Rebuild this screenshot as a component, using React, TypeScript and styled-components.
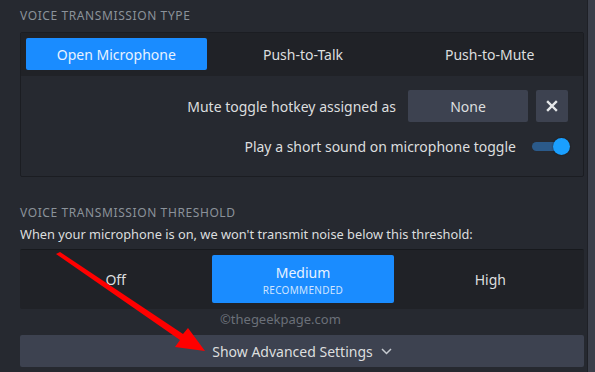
import React from 'react';
import styled, { createGlobalStyle } from 'styled-components';

const GlobalStyle = createGlobalStyle`
  html, body {
    margin: 0;
    padding: 0;
    background: #262930;
  }
  body {
    font-family: "Noto Sans", "Open Sans", Arial, sans-serif;
    color: #dcdedf;
  }
`;

const Page = styled.div`
  position: relative;
  width: 595px;
  height: 372px;
  display: flex;
  overflow: hidden;
  background: #262930;
`;

const Content = styled.div`
  flex: 1;
  padding: 8px 0 0 20px;
  display: flex;
  flex-direction: column;
`;

const Scrollbar = styled.div`
  width: 7px;
  margin-left: 3px;
  border-left: 1px solid #1e2026;
  background: #3b3f4a;
`;

const SectionTitle = styled.div<{ $top?: number }>`
  font-size: 12px;
  line-height: 16px;
  letter-spacing: 0.6px;
  color: #8b929a;
  text-transform: uppercase;
  margin-top: ${(p) => p.$top ?? 0}px;
`;

const Box = styled.div`
  margin-top: 8px;
  border: 1px solid #1b1d22;
  border-radius: 2px;
  overflow: hidden;
`;

const Segmented = styled.div`
  display: grid;
  grid-template-columns: repeat(3, 1fr);
  gap: 6px;
  padding: 5px 3px 6px 5px;
  background: #202227;
`;

const SegButton = styled.div<{ $active?: boolean; $tall?: boolean }>`
  height: ${(p) => (p.$tall ? 48 : 32)}px;
  border-radius: 2px;
  background: ${(p) => (p.$active ? '#1a8cff' : 'transparent')};
  color: ${(p) => (p.$active ? '#e8f2ff' : '#dcdedf')};
  display: flex;
  flex-direction: column;
  align-items: center;
  justify-content: center;
  font-size: 14px;
`;

const SubLabel = styled.span`
  font-size: 10px;
  line-height: 12px;
  letter-spacing: 0.3px;
  color: #cfe4ff;
  margin-top: 2px;
`;

const Options = styled.div`
  display: flex;
  flex-direction: column;
  align-items: flex-end;
  padding: 14px 15px 20px 0;
  gap: 15px;
`;

const OptionRow = styled.div`
  display: flex;
  align-items: center;
  font-size: 14px;
  color: #dcdedf;
`;

const HotkeyButton = styled.div`
  width: 120px;
  height: 32px;
  margin-left: 12px;
  background: #3d4250;
  border-radius: 2px;
  display: flex;
  align-items: center;
  justify-content: center;
`;

const ClearButton = styled.div`
  width: 32px;
  height: 32px;
  margin-left: 8px;
  background: #3d4250;
  border-radius: 2px;
  display: flex;
  align-items: center;
  justify-content: center;
`;

const Toggle = styled.div`
  position: relative;
  width: 38px;
  height: 18px;
  margin-left: 16px;
  margin-right: -2px;
  display: flex;
  align-items: center;
`;

const Track = styled.div`
  width: 30px;
  height: 9px;
  border-radius: 5px;
  background: #2b5a8a;
`;

const Knob = styled.div`
  position: absolute;
  right: 0;
  top: 0;
  width: 17px;
  height: 17px;
  border-radius: 50%;
  background: #1a9fff;
  box-shadow: 0 0 2px rgba(0, 0, 0, 0.5);
`;

const Description = styled.div`
  font-size: 12.8px;
  line-height: 18px;
  margin-top: 4px;
  color: #dcdedf;
`;

const ThresholdBox = styled.div`
  margin-top: 6px;
  border-top: 1px solid #17191d;
  border-radius: 2px;
  overflow: hidden;
`;

const Watermark = styled.div`
  font-size: 13px;
  line-height: 16px;
  color: #6b7079;
  margin: 2px 0 0 200px;
`;

const AdvancedBar = styled.div`
  margin-top: 8px;
  height: 32px;
  background: #3d4250;
  border-radius: 2px;
  display: flex;
  align-items: center;
  justify-content: center;
  gap: 8px;
  font-size: 14px;
  color: #dcdedf;
`;

const ArrowLayer = styled.svg`
  position: absolute;
  left: 0;
  top: 0;
  pointer-events: none;
`;

export default function App() {
  return (
    <>
      <GlobalStyle />
      <Page>
        <Content>
          <SectionTitle>Voice Transmission Type</SectionTitle>
          <Box>
            <Segmented>
              <SegButton $active>Open Microphone</SegButton>
              <SegButton>Push-to-Talk</SegButton>
              <SegButton>Push-to-Mute</SegButton>
            </Segmented>
            <Options>
              <OptionRow>
                Mute toggle hotkey assigned as
                <HotkeyButton>None</HotkeyButton>
                <ClearButton>
                  <svg width="12" height="12" viewBox="0 0 12 12">
                    <path d="M2 2 L10 10 M10 2 L2 10" stroke="#e6e8ea" strokeWidth="2.4" strokeLinecap="square" />
                  </svg>
                </ClearButton>
              </OptionRow>
              <OptionRow>
                Play a short sound on microphone toggle
                <Toggle>
                  <Track />
                  <Knob />
                </Toggle>
              </OptionRow>
            </Options>
          </Box>

          <SectionTitle $top={28}>Voice Transmission Threshold</SectionTitle>
          <Description>When your microphone is on, we won't transmit noise below this threshold:</Description>
          <ThresholdBox>
            <Segmented>
              <SegButton $tall>Off</SegButton>
              <SegButton $tall $active>
                Medium
                <SubLabel>RECOMMENDED</SubLabel>
              </SegButton>
              <SegButton $tall>High</SegButton>
            </Segmented>
          </ThresholdBox>
          <Watermark>©thegeekpage.com</Watermark>
          <AdvancedBar>
            Show Advanced Settings
            <svg width="11" height="7" viewBox="0 0 11 7">
              <path d="M1 1 L5.5 5.5 L10 1" fill="none" stroke="#c6cad0" strokeWidth="1.5" />
            </svg>
          </AdvancedBar>
        </Content>
        <Scrollbar />
        <ArrowLayer width="595" height="372" viewBox="0 0 595 372">
          <polygon points="56,254 60,252 183,334 188,328 205,351 175,347 180,340" fill="#ff0000" />
        </ArrowLayer>
      </Page>
    </>
  );
}
